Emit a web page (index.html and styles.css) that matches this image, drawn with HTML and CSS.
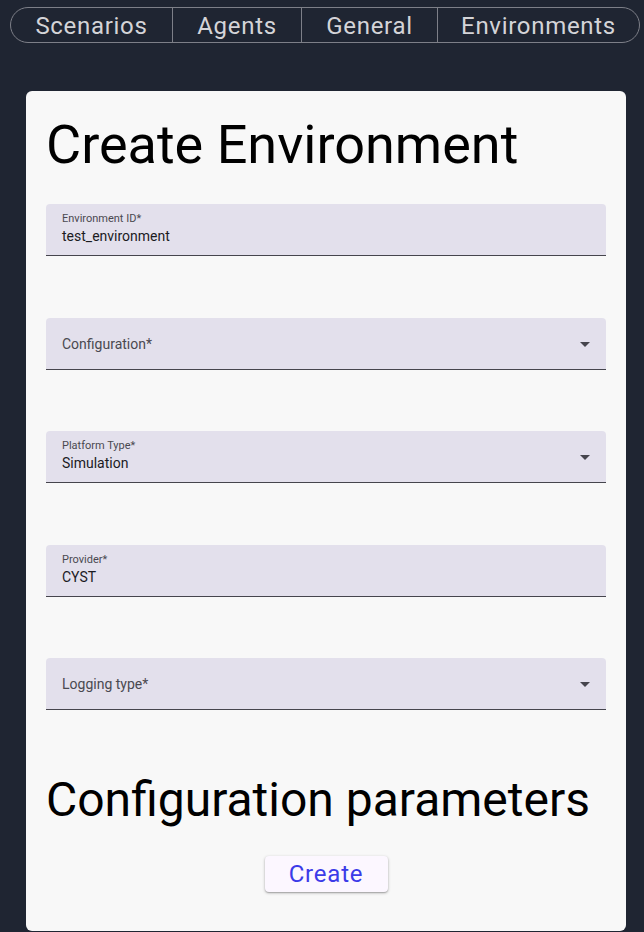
FILE: index.html
```html
<!DOCTYPE html>
<html>
<head>
<meta charset="utf-8">
<link rel="stylesheet" href="styles.css">
</head>
<body>
<nav class="tabs">
  <div class="tab">Scenarios</div>
  <div class="tab">Agents</div>
  <div class="tab">General</div>
  <div class="tab">Environments</div>
</nav>
<main class="card">
  <h1 class="title">Create Environment</h1>
  <div class="fields">
    <div class="field filled">
      <span class="label">Environment ID*</span>
      <span class="value">test_environment</span>
    </div>
    <div class="field empty select">
      <span class="placeholder">Configuration*</span>
      <span class="arrow"></span>
    </div>
    <div class="field filled select">
      <span class="label">Platform Type*</span>
      <span class="value">Simulation</span>
      <span class="arrow"></span>
    </div>
    <div class="field filled">
      <span class="label">Provider*</span>
      <span class="value">CYST</span>
    </div>
    <div class="field empty select">
      <span class="placeholder">Logging type*</span>
      <span class="arrow"></span>
    </div>
  </div>
  <h2 class="title sub">Configuration parameters</h2>
  <div class="actions">
    <button class="btn">Create</button>
  </div>
</main>
</body>
</html>
```
FILE: styles.css
```css
* { box-sizing: border-box; }
html, body { margin: 0; padding: 0; }
body {
  background: #1f2532;
  font-family: Roboto, "Noto Sans", sans-serif;
  height: 932px;
  overflow: hidden;
}
.tabs {
  display: flex;
  margin: 7px 4px 0 10px;
  height: 36px;
  border: 1px solid #7d7f88;
  border-radius: 18px;
}
.tab {
  display: flex;
  align-items: center;
  justify-content: center;
  padding-top: 2px;
  color: #d4d4d8;
  font-size: 24px;
  letter-spacing: 0.7px;
  border-left: 1px solid #7d7f88;
}
.tab:first-child { border-left: none; }
.tab:nth-child(1) { width: 161px; }
.tab:nth-child(2) { width: 129px; }
.tab:nth-child(3) { width: 136px; }
.tab:nth-child(4) { flex: 1; }
.card {
  margin: 48px 18px 0 26px;
  background: #f8f8f8;
  border-radius: 6px;
  padding: 20px 20px 20px;
  height: 840px;
}
.title {
  margin: 0;
  font-weight: 400;
  font-size: 54px;
  line-height: 67px;
  color: #000;
  white-space: nowrap;
}
.fields {
  display: flex;
  flex-direction: column;
  gap: 61.5px;
  margin-top: 26px;
}
.field {
  position: relative;
  height: 52px;
  background: #e3e0ec;
  border-radius: 4px 4px 0 0;
  border-bottom: 1px solid #46454d;
  padding: 0 16px;
  display: flex;
  flex-direction: column;
}
.field.filled { padding-top: 8px; }
.field.empty { justify-content: center; }
.label {
  font-size: 11px;
  line-height: 13px;
  color: #4a4950;
}
.value {
  font-size: 14px;
  line-height: 20px;
  margin-top: 1px;
  color: #1b1b1f;
}
.placeholder {
  font-size: 14px;
  color: #4a4950;
  margin-top: 1px;
}
.arrow {
  position: absolute;
  right: 16px;
  top: 24px;
  width: 0;
  height: 0;
  border-left: 5px solid transparent;
  border-right: 5px solid transparent;
  border-top: 5px solid #46454d;
}
.sub {
  margin-top: 61px;
  font-size: 48px;
  line-height: 58px;
}
.actions {
  display: flex;
  justify-content: center;
  margin-top: 27px;
}
.btn {
  width: 123px;
  height: 36px;
  border: none;
  border-radius: 4px;
  background: #fcf7ff;
  color: #3b3be8;
  font-family: Roboto, sans-serif;
  font-size: 24px;
  letter-spacing: 0.8px;
  box-shadow: 0 1px 3px rgba(0,0,0,0.3), 0 1px 1px rgba(0,0,0,0.14);
  padding: 0;
}
```
